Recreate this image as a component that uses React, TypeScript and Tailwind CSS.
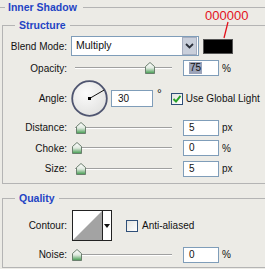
import React from 'react';

const thumbs: Record<string, number> = {
  opacity: 74,
  distance: 5,
  choke: 1,
  size: 5,
  noise: 1,
};

const Thumb = () => (
  <svg width="10" height="12" viewBox="0 0 10 12">
    <defs>
      <linearGradient id="tg" x1="0" y1="0" x2="0" y2="1">
        <stop offset="0" stopColor="#ffffff" />
        <stop offset="0.5" stopColor="#dfe9df" />
        <stop offset="1" stopColor="#3f9a4c" />
      </linearGradient>
    </defs>
    <polygon points="5,0.5 9.5,4.5 9.5,11.5 0.5,11.5 0.5,4.5" fill="url(#tg)" stroke="#6b7f6e" strokeWidth="1" />
  </svg>
);

const Slider = ({ name }: { name: string }) => (
  <div className="relative ml-[4px] h-[12px] w-[101px]">
    <div className="absolute left-[4px] right-0 top-[5px] h-[2px] border-t border-[#a0a0a0] border-b border-b-white" />
    <div className="absolute top-0" style={{ left: thumbs[name] }}>
      <Thumb />
    </div>
  </div>
);

const NumInput = ({ value, selected }: { value: string; selected?: boolean }) => (
  <div className="ml-[11px] flex h-[16px] w-[36px] items-center border border-[#7f9db9] bg-white pl-[5px]">
    <span className={selected ? 'bg-[#9ba3b9] px-[1px] leading-[12px]' : 'leading-[12px]'}>{value}</span>
  </div>
);

const Label = ({ text }: { text: string }) => (
  <div className="w-[64px] shrink-0 text-right">{text}</div>
);

const SliderRow = ({ label, name, value, unit, h, selected }: { label: string; name: string; value: string; unit: string; h: string; selected?: boolean }) => (
  <div className={`flex items-center ${h}`}>
    <Label text={label} />
    <Slider name={name} />
    <NumInput value={value} selected={selected} />
    <span className="ml-[3px]">{unit}</span>
  </div>
);

const CheckBox = ({ checked }: { checked?: boolean }) => (
  <div className="flex h-[12px] w-[12px] items-center justify-center border border-[#2f4f78] bg-gradient-to-br from-[#e4e4e0] to-white">
    {checked && (
      <svg width="10" height="10" viewBox="0 0 10 10">
        <polyline points="1.5,5 4,7.5 8.5,1.8" fill="none" stroke="#2aa22a" strokeWidth="2" />
      </svg>
    )}
  </div>
);

export default function App() {
  return (
    <div className="relative h-[269px] w-[265px] overflow-hidden bg-[#ecebe6] font-['Liberation_Sans',Arial,sans-serif] text-[10px] text-[#111]">
      <fieldset className="w-[300px] border-t border-[#b4b4b4]">
        <legend className="ml-[5px] px-[3px] pr-[6px] text-[10.5px] font-bold leading-[14px] text-[#1f44c4]">Inner Shadow</legend>

        <fieldset className="ml-[2px] mt-[5px] w-[290px] border border-[#b4b4b4] pb-[4px]">
          <legend className="ml-[12px] px-[4px] text-[10.5px] font-bold leading-[12px] text-[#1f44c4]">Structure</legend>
          <div className="pt-[5px]">
            <div className="flex h-[20px] items-center">
              <Label text="Blend Mode:" />
              <div className="ml-[4px] flex h-[20px] w-[128px] items-center border border-[#7f9db9] bg-white">
                <span className="ml-[4px] flex-1 text-[10.5px]">Multiply</span>
                <div className="mr-[1px] flex h-[18px] w-[15px] items-center justify-center border border-[#a5adbf] bg-[#c9cfdb]">
                  <svg width="9" height="6" viewBox="0 0 9 6">
                    <polyline points="1,1 4.5,4.5 8,1" fill="none" stroke="#2a2f3a" strokeWidth="1.8" />
                  </svg>
                </div>
              </div>
              <div className="ml-[4px] h-[15px] w-[30px] border border-[#555] bg-black" />
            </div>

            <SliderRow label="Opacity:" name="opacity" value="75" unit="%" h="h-[24px]" selected />

            <div className="flex h-[37px] items-center">
              <Label text="Angle:" />
              <svg className="ml-[4px]" width="37" height="37" viewBox="0 0 37 37">
                <defs>
                  <radialGradient id="cg" cx="0.4" cy="0.35" r="0.7">
                    <stop offset="0" stopColor="#fbfbfb" />
                    <stop offset="1" stopColor="#e2e2e0" />
                  </radialGradient>
                </defs>
                <circle cx="18.5" cy="18.5" r="17.3" fill="url(#cg)" stroke="#4f5570" strokeWidth="1.8" />
                <line x1="18.5" y1="18.5" x2="33.2" y2="10" stroke="#111" strokeWidth="1" />
                <rect x="17" y="17" width="3" height="3" fill="#000" />
              </svg>
              <div className="ml-[3px] flex h-[17px] w-[42px] items-center border border-[#7f9db9] bg-white pl-[6px]">30</div>
              <span className="ml-[4px] self-start pt-[8px] text-[12px] leading-[12px]">°</span>
              <div className="ml-[9px]">
                <CheckBox checked />
              </div>
              <span className="ml-[3px]">Use Global Light</span>
            </div>

            <SliderRow label="Distance:" name="distance" value="5" unit="px" h="h-[21px]" />
            <SliderRow label="Choke:" name="choke" value="0" unit="%" h="h-[20px]" />
            <SliderRow label="Size:" name="size" value="5" unit="px" h="h-[21px]" />
          </div>
        </fieldset>

        <fieldset className="ml-[2px] mt-[8px] w-[290px] border border-[#b4b4b4] pb-[2px]">
          <legend className="ml-[12px] px-[4px] text-[10.5px] font-bold leading-[12px] text-[#1f44c4]">Quality</legend>
          <div className="pt-[6px]">
            <div className="flex h-[31px] items-center">
              <Label text="Contour:" />
              <div className="ml-[5px] flex h-[31px] w-[40px] border border-[#222] bg-white">
                <svg width="29" height="29" viewBox="0 0 29 29">
                  <polygon points="0,29 29,0 29,29" fill="#a3a3a3" />
                </svg>
                <div className="flex flex-1 items-center justify-center border-l border-[#222]">
                  <svg width="6" height="4" viewBox="0 0 6 4">
                    <polygon points="0,0 6,0 3,4" fill="#111" />
                  </svg>
                </div>
              </div>
              <div className="ml-[14px]">
                <CheckBox />
              </div>
              <span className="ml-[4px]">Anti-aliased</span>
            </div>
            <div className="mt-[3px]">
              <SliderRow label="Noise:" name="noise" value="0" unit="%" h="h-[21px]" />
            </div>
          </div>
        </fieldset>
      </fieldset>

      <div className="absolute left-[205px] top-[8px] text-[13px] leading-[15px] text-[#e3121c]">000000</div>
      <svg className="absolute left-[220px] top-[20px]" width="12" height="20" viewBox="0 0 12 20">
        <line x1="8" y1="2" x2="4" y2="18" stroke="#e3121c" strokeWidth="1.3" />
      </svg>
    </div>
  );
}
